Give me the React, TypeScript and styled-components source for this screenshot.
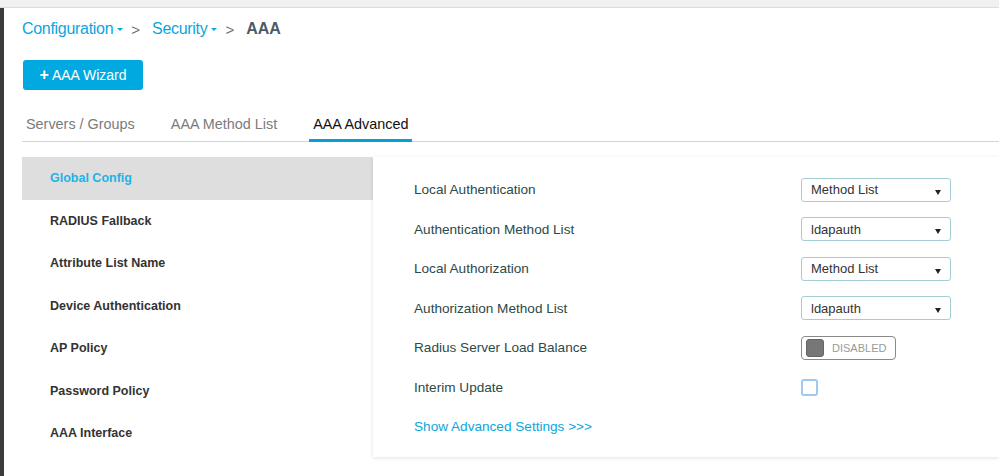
import styled, { createGlobalStyle } from "styled-components";

const GlobalStyle = createGlobalStyle`
  body {
    margin: 0;
    background: #ffffff;
    font-family: "Liberation Sans", Arial, sans-serif;
  }
`;

const navItems = [
  "Global Config",
  "RADIUS Fallback",
  "Attribute List Name",
  "Device Authentication",
  "AP Policy",
  "Password Policy",
  "AAA Interface",
];

type Row =
  | { label: string; kind: "select"; value: string }
  | { label: string; kind: "toggle" }
  | { label: string; kind: "checkbox" };

const rows: Row[] = [
  { label: "Local Authentication", kind: "select", value: "Method List" },
  { label: "Authentication Method List", kind: "select", value: "ldapauth" },
  { label: "Local Authorization", kind: "select", value: "Method List" },
  { label: "Authorization Method List", kind: "select", value: "ldapauth" },
  { label: "Radius Server Load Balance", kind: "toggle" },
  { label: "Interim Update", kind: "checkbox" },
];

export default function App() {
  return (
    <>
      <GlobalStyle />
      <TopStrip />
      <Frame>
        <SideBar />
        <Main>
          <Breadcrumb>
            <Crumb>
              Configuration <Caret />
            </Crumb>
            <Sep>&gt;</Sep>
            <Crumb>
              Security <Caret />
            </Crumb>
            <Sep>&gt;</Sep>
            <Current>AAA</Current>
          </Breadcrumb>
          <WizardButton>
            <span>+</span> AAA Wizard
          </WizardButton>
          <Tabs>
            <Tab>Servers / Groups</Tab>
            <Tab>AAA Method List</Tab>
            <Tab $active>AAA Advanced</Tab>
          </Tabs>
          <Body>
            <Nav>
              {navItems.map((item, i) => (
                <NavItem key={item} $active={i === 0}>
                  {item}
                </NavItem>
              ))}
            </Nav>
            <Panel>
              {rows.map((row) => (
                <FormRow key={row.label}>
                  <Label>{row.label}</Label>
                  {row.kind === "select" && (
                    <Select>
                      {row.value}
                      <Arrow />
                    </Select>
                  )}
                  {row.kind === "toggle" && (
                    <Toggle>
                      <Knob />
                      DISABLED
                    </Toggle>
                  )}
                  {row.kind === "checkbox" && <Checkbox />}
                </FormRow>
              ))}
              <AdvancedLink>Show Advanced Settings &gt;&gt;&gt;</AdvancedLink>
            </Panel>
          </Body>
        </Main>
      </Frame>
    </>
  );
}

const TopStrip = styled.div`
  height: 7px;
  background: #f1f1f1;
  border-bottom: 1px solid #dcdcdc;
`;

const Frame = styled.div`
  display: flex;
  height: 468px;
`;

const SideBar = styled.div`
  width: 4px;
  background: #3b3b3b;
`;

const Main = styled.div`
  flex: 1;
  padding-left: 18px;
  display: flex;
  flex-direction: column;
`;

const Breadcrumb = styled.div`
  display: flex;
  align-items: center;
  height: 20px;
  margin-top: 11px;
  font-size: 16px;
`;

const Crumb = styled.span`
  color: #0aa6e0;
  display: flex;
  align-items: center;
  gap: 4px;
  letter-spacing: -0.3px;
`;

const Caret = styled.span`
  display: inline-block;
  width: 0;
  height: 0;
  border-left: 3px solid transparent;
  border-right: 3px solid transparent;
  border-top: 3px solid #0aa6e0;
  margin-top: 1px;
`;

const Sep = styled.span`
  color: #6f6f6f;
  font-size: 15px;
  margin: 0 12px 0 8px;
`;

const Current = styled.span`
  color: #4d5966;
  font-weight: bold;
  font-size: 16px;
`;

const WizardButton = styled.button`
  margin-top: 21px;
  width: 120px;
  height: 30px;
  margin-left: 1px;
  border: none;
  border-radius: 3px;
  background: #00a9e0;
  color: #ffffff;
  font-family: "Liberation Sans", Arial, sans-serif;
  font-size: 14px;
  padding: 0;
  span {
    font-weight: bold;
    font-size: 16px;
  }
`;

const Tabs = styled.div`
  display: flex;
  gap: 28px;
  margin-top: 20px;
  border-bottom: 1px solid #d4d4d4;
`;

const Tab = styled.div<{ $active?: boolean }>`
  font-size: 14.4px;
  color: ${(p) => (p.$active ? "#111111" : "#7b7b7b")};
  padding: 6px 4px 7px;
  margin-bottom: -1px;
  border-bottom: 3px solid ${(p) => (p.$active ? "#049fd9" : "transparent")};
`;

const Body = styled.div`
  display: flex;
  margin-top: 15px;
  align-items: flex-start;
`;

const Nav = styled.div`
  width: 351px;
  display: flex;
  flex-direction: column;
`;

const NavItem = styled.div<{ $active?: boolean }>`
  height: 42.5px;
  display: flex;
  align-items: center;
  padding-left: 28px;
  font-size: 12.5px;
  font-weight: bold;
  color: ${(p) => (p.$active ? "#1ab4e8" : "#333333")};
  background: ${(p) => (p.$active ? "#dedede" : "transparent")};
`;

const Panel = styled.div`
  flex: 1;
  height: 300px;
  background: #ffffff;
  box-shadow: 0 1px 4px rgba(0, 0, 0, 0.12);
  padding: 13px 0 0 41px;
  box-sizing: border-box;
  display: flex;
  flex-direction: column;
`;

const FormRow = styled.div`
  display: flex;
  align-items: center;
  height: 39.5px;
`;

const Label = styled.div`
  width: 387px;
  font-size: 13.6px;
  color: #2b4a4a;
`;

const Select = styled.div`
  position: relative;
  width: 150px;
  height: 24px;
  box-sizing: border-box;
  border: 1px solid #a3ccd6;
  border-radius: 3px;
  padding-left: 9px;
  display: flex;
  align-items: center;
  font-size: 13px;
  color: #333333;
`;

const Arrow = styled.span`
  position: absolute;
  right: 9px;
  top: 11px;
  width: 0;
  height: 0;
  border-left: 3.5px solid transparent;
  border-right: 3.5px solid transparent;
  border-top: 5px solid #222222;
`;

const Toggle = styled.div`
  width: 95px;
  height: 24px;
  box-sizing: border-box;
  border: 1px solid #8a8a8a;
  border-radius: 4px;
  display: flex;
  align-items: center;
  gap: 8px;
  padding-left: 4px;
  font-size: 11px;
  color: #9a9a9a;
`;

const Knob = styled.span`
  width: 18px;
  height: 18px;
  box-sizing: border-box;
  border: 1px solid #666666;
  border-radius: 3px;
  background: #777777;
`;

const Checkbox = styled.div`
  width: 17px;
  height: 17px;
  box-sizing: border-box;
  border: 2px solid #9dcaf0;
  border-radius: 3px;
`;

const AdvancedLink = styled.div`
  margin-top: 12px;
  font-size: 13.6px;
  color: #0aa6e0;
`;
